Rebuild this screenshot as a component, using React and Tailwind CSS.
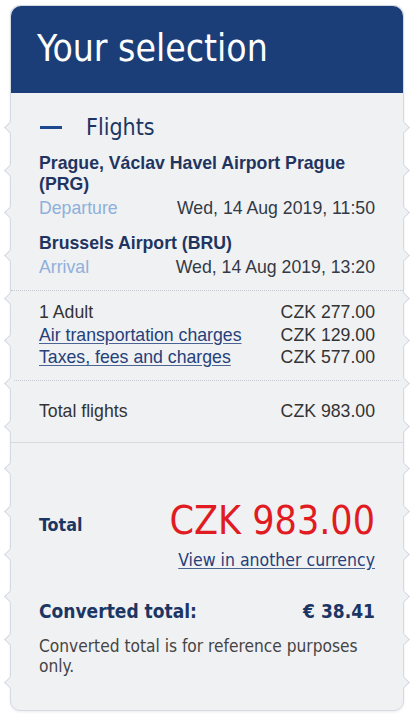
import React from "react";

const NOTCHES = [127, 170, 212, 255, 298, 340, 383, 426, 468, 511, 554, 596, 639, 682];

const tahoma = "font-['DejaVu_Sans_Condensed','DejaVu_Sans',sans-serif]";

const Notch = ({ side, top }) => (
  <div
    className={`absolute w-[9px] h-[9px] rotate-45 bg-[#f0f1f3] ${
      side === "left"
        ? "left-[-5px] border-l border-b border-[#d3dae4]"
        : "right-[-5px] border-r border-t border-[#d3dae4]"
    }`}
    style={{ top: top - 5 - 5 }}
  />
);

const PriceRow = ({ label, value, link }) => (
  <div className="flex justify-between leading-[22.5px]">
    {link ? (
      <a href="#" className="text-[#25407a] underline decoration-[#4a6494] underline-offset-2">
        {label}
      </a>
    ) : (
      <span className="text-[#333]">{label}</span>
    )}
    <span className="text-[#333]">{value}</span>
  </div>
);

export default function App() {
  return (
    <div className="min-h-[724px] bg-white pt-[5px] pl-[10px]">
      <div className="relative w-[394px] rounded-[10px] border border-[#d3dae4] bg-[#f0f1f3] shadow-[0_1px_3px_rgba(0,0,0,0.08)]">
        {NOTCHES.map((t) => (
          <React.Fragment key={t}>
            <Notch side="left" top={t} />
            <Notch side="right" top={t} />
          </React.Fragment>
        ))}

        {/* header */}
        <div className={`h-[87px] rounded-t-[10px] bg-[#1b3e78] px-[26px] pt-[19px] ${tahoma} text-[37px] leading-[48px] text-white`}>
          Your selection
        </div>

        {/* flights block */}
        <div className="px-[28px] pt-[20px] pb-[12px] font-['Liberation_Sans',Arial,sans-serif] text-[17.7px]">
          <div className="flex h-[28px] items-center">
            <span className="ml-px h-[3px] w-[22px] bg-[#1d4a8d]" />
            <span className={`ml-[24px] ${tahoma} text-[23px] text-[#1c3664]`}>
              Flights
            </span>
          </div>

          <div className="mt-[12px] font-bold leading-[21px] text-[#1f3560]">
            Prague, Václav Havel Airport Prague (PRG)
          </div>
          <div className="mt-[3px] flex justify-between leading-[21px]">
            <span className="text-[#8eb0da]">Departure</span>
            <span className="text-[#333a45]">Wed, 14 Aug 2019, 11:50</span>
          </div>

          <div className="mt-[14px] font-bold leading-[21px] text-[#1f3560]">
            Brussels Airport (BRU)
          </div>
          <div className="mt-[3px] flex justify-between leading-[21px]">
            <span className="text-[#8eb0da]">Arrival</span>
            <span className="text-[#333a45]">Wed, 14 Aug 2019, 13:20</span>
          </div>
        </div>

        {/* charges */}
        <div className="border-t border-dotted border-[#c4c9d1] px-[28px] pt-[10px] pb-[11px] font-['Liberation_Sans',Arial,sans-serif] text-[17.7px]">
          <PriceRow label="1 Adult" value="CZK 277.00" />
          <PriceRow label="Air transportation charges" value="CZK 129.00" link />
          <PriceRow label="Taxes, fees and charges" value="CZK 577.00" link />
        </div>

        <div className="border-t border-dotted border-[#c4c9d1] px-[28px] pt-[19px] pb-[20px] font-['Liberation_Sans',Arial,sans-serif] text-[17.7px]">
          <PriceRow label="Total flights" value="CZK 983.00" />
        </div>

        {/* total */}
        <div className={`border-t border-[#d6dae0] px-[28px] pt-[56px] pb-[34px] ${tahoma}`}>
          <div className="flex items-center justify-between">
            <span className="pt-[8px] text-[17.8px] font-bold text-[#1c3664]">Total</span>
            <span className="text-[39px] leading-[44px] text-[#e01b22]">CZK 983.00</span>
          </div>
          <div className="mt-[6px] text-right text-[17.5px] leading-[22px]">
            <a href="#" className="text-[#25407a] underline decoration-[#4a6494] underline-offset-2">
              View in another currency
            </a>
          </div>

          <div className="mt-[28px] flex justify-between text-[19px] font-bold leading-[24px] text-[#1c3664]">
            <span>Converted total:</span>
            <span>€ 38.41</span>
          </div>
          <p className="mt-[13px] text-[17.2px] leading-[20px] text-[#444]">
            Converted total is for reference purposes only.
          </p>
        </div>
      </div>
    </div>
  );
}
